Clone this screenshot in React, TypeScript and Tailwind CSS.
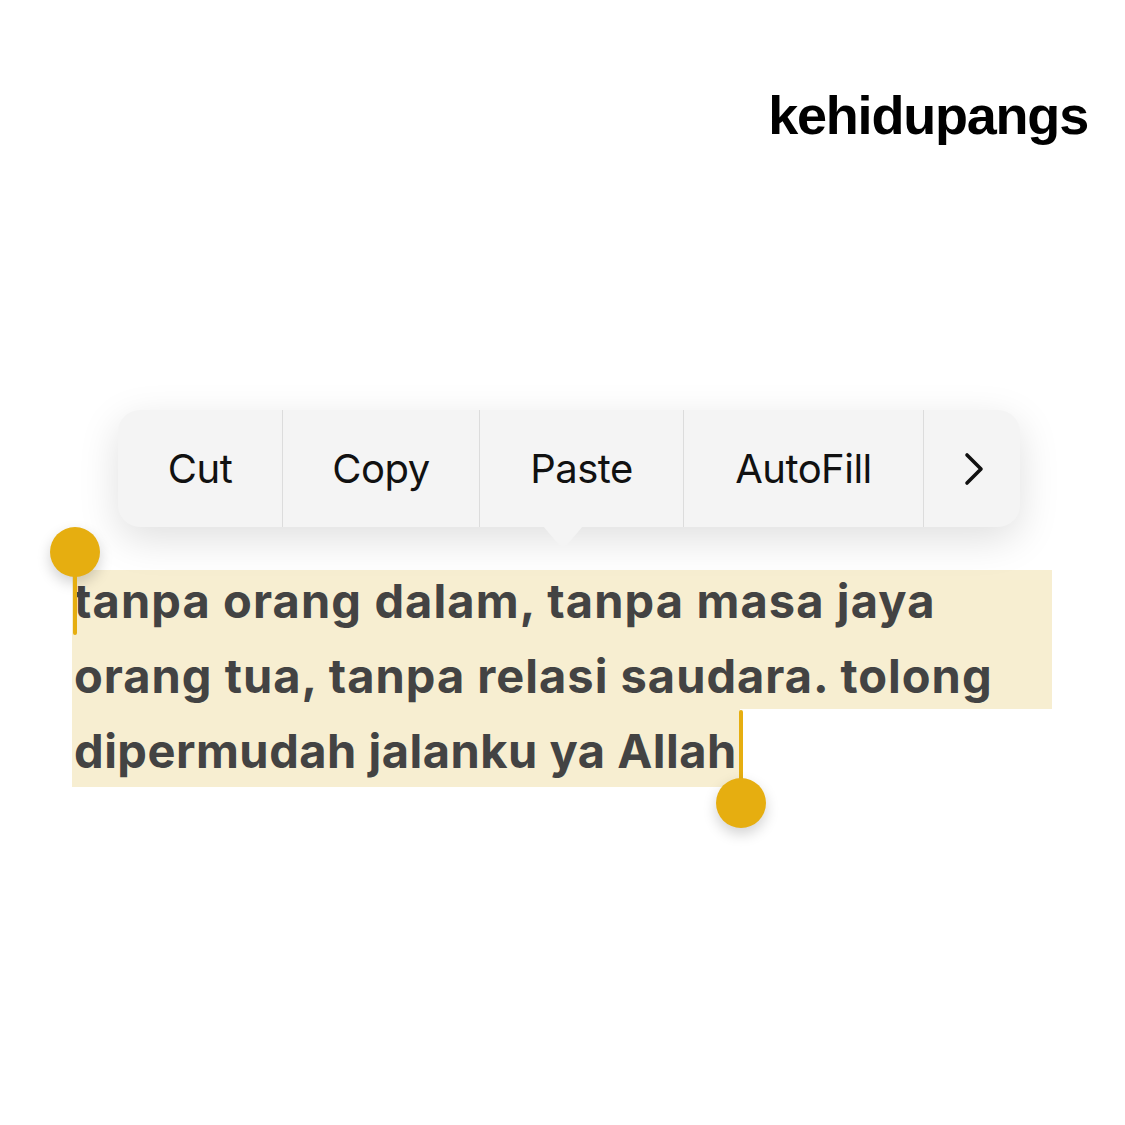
const items = [
  { label: 'Cut', w: 'w-[165px]' },
  { label: 'Copy', w: 'w-[197px]' },
  { label: 'Paste', w: 'w-[204px]' },
  { label: 'AutoFill', w: 'w-[240px]' },
];

function Handle({ top }: { top: boolean }) {
  return (
    <div className="flex flex-col items-center">
      {top && <div className="w-[50px] h-[50px] rounded-full bg-[#e6ae10] shadow-[0_6px_14px_rgba(0,0,0,0.18)]" />}
      <div className={`w-[4px] bg-[#e6ae10] ${top ? 'h-[60px] -mt-[2px] rounded-b-full' : 'h-[70px] -mb-[2px] rounded-t-full'}`} />
      {!top && <div className="w-[50px] h-[50px] rounded-full bg-[#e6ae10] shadow-[0_6px_14px_rgba(0,0,0,0.18)]" />}
    </div>
  );
}

export default function App() {
  return (
    <div className="w-[1125px] h-[1125px] bg-white relative overflow-hidden font-['Liberation_Sans',sans-serif]">
      {/* watermark */}
      <div className="flex justify-end pr-[37px] pt-[88px]">
        <span className="text-[54px] leading-none font-bold tracking-[-1.2px] text-black">kehidupangs</span>
      </div>

      {/* edit menu */}
      <div className="mt-[268px] ml-[118px] w-[902px] h-[117px] relative rounded-[22px] bg-[#f4f4f4] shadow-[0_12px_40px_rgba(0,0,0,0.13)] flex">
        {items.map((it) => (
          <div key={it.label} className={`${it.w} h-full flex items-center justify-center border-r border-[#dcdcdc] text-[40px] text-[#111] font-['Inter',sans-serif] tracking-[-0.5px]`}>
            {it.label}
          </div>
        ))}
        <div className="flex-1 flex items-center justify-center text-[#111] pl-[4px]">
          <svg width="24" height="34" viewBox="0 0 24 34" fill="none">
            <path d="M5 3 L19 17 L5 31" stroke="#111" strokeWidth="3.6" strokeLinecap="round" strokeLinejoin="round" />
          </svg>
        </div>
        <svg className="absolute left-[425px] top-[116px]" width="40" height="22" viewBox="0 0 40 22">
          <path d="M0 0 L16 19 Q20 23 24 19 L40 0 Z" fill="#f4f4f4" />
        </svg>
      </div>

      {/* selected text */}
      <div className="mt-[43px] ml-[72px] text-[#434343] font-['Inter',sans-serif] font-bold text-[47px] leading-none tracking-[1px] whitespace-nowrap">
        <div className="w-[980px] h-[68px] bg-[#f7eed1] pt-[7px] pl-[2px] tracking-[1.1px]">tanpa orang dalam, tanpa masa jaya</div>
        <div className="w-[980px] h-[71px] bg-[#f7eed1] pt-[14px] pl-[2px]">orang tua, tanpa relasi saudara. tolong</div>
        <div className="w-[668px] h-[78px] bg-[#f7eed1] pt-[18px] pl-[2px] tracking-[0.5px]">dipermudah jalanku ya Allah</div>
      </div>

      {/* selection handles */}
      <div className="absolute left-[50px] top-[527px]">
        <Handle top />
      </div>
      <div className="absolute left-[716px] top-[710px]">
        <Handle top={false} />
      </div>
    </div>
  );
}
